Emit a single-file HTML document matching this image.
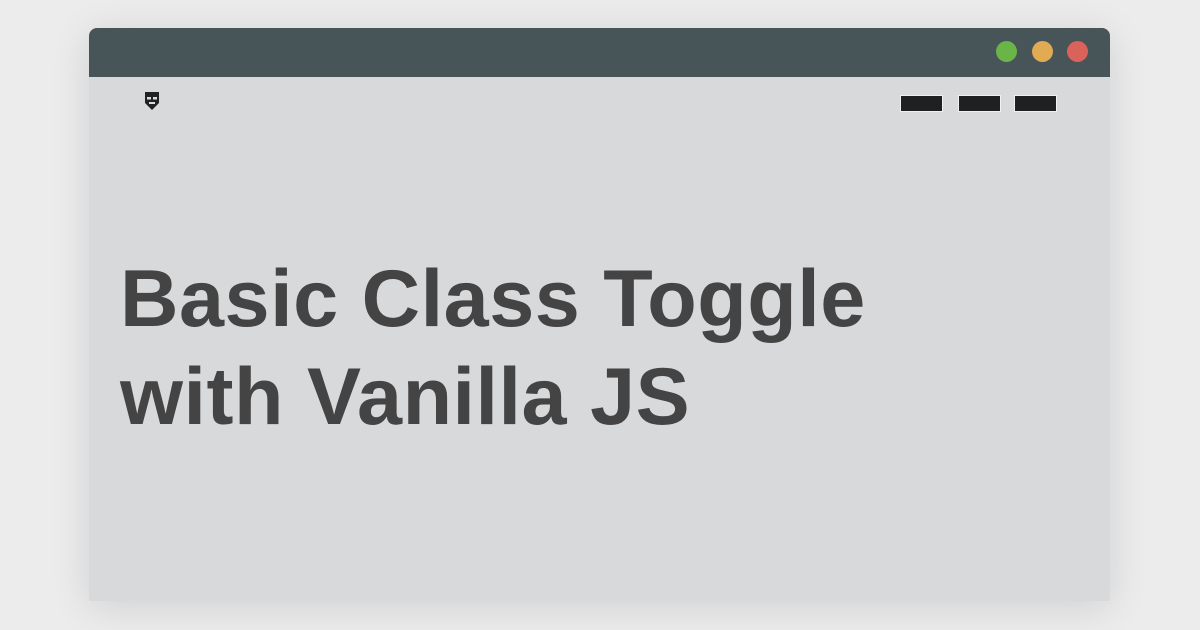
<!DOCTYPE html>
<html><head><style>
html,body{margin:0;padding:0}
body{width:1200px;height:630px;background:#ececec;position:relative;overflow:hidden;font-family:"Liberation Sans",sans-serif}
.win{position:absolute;left:89px;top:28px;width:1021px;height:573px;background:#d8d9db;border-radius:8px 8px 2px 2px;overflow:hidden;box-shadow:0 6px 40px rgba(0,0,0,0.12)}
.bar{position:absolute;left:0;top:0;width:100%;height:49px;background:#475458}
.dot{position:absolute;top:13px;width:21px;height:21px;border-radius:50%}
.nav{position:absolute;top:67px;width:43px;height:17px;background:#1f2022;box-shadow:0 0 0 1px #f0f0f0 inset}
.nav i{position:absolute;left:1px;top:1px;right:1px;bottom:1px;background:#1f2022}
h1{position:absolute;left:31px;top:222px;margin:0;font-size:81px;line-height:98px;font-weight:bold;color:#444444;letter-spacing:0.5px}
</style></head><body>
<div class="win">
<div class="bar">
<div class="dot" style="left:907px;background:#6ab547"></div>
<div class="dot" style="left:943px;background:#e1ab53"></div>
<div class="dot" style="left:978px;background:#d9625a"></div>
</div>
<svg style="position:absolute;left:55px;top:63px" width="16" height="20" viewBox="0 0 16 20">
<path d="M1 1h14v11l-7 7-7-7z" fill="#222"/>
<rect x="3" y="6" width="4" height="2.5" fill="#ddd"/><rect x="9" y="6" width="4" height="2.5" fill="#ddd"/>
<rect x="5" y="11" width="6" height="2" fill="#ddd"/>
</svg>
<div class="nav" style="left:811px"><i></i></div>
<div class="nav" style="left:869px"><i></i></div>
<div class="nav" style="left:925px"><i></i></div>
<h1>Basic Class Toggle<br>with Vanilla JS</h1>
</div>
</body></html>
